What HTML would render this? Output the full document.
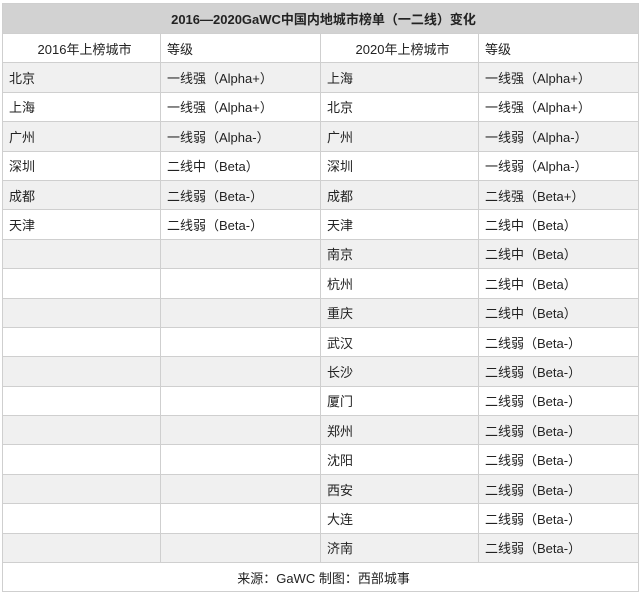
<!DOCTYPE html>
<html><head><meta charset="utf-8"><style>
body{margin:0;background:#fff;width:640px;height:594px;overflow:hidden;font-family:"Liberation Sans","Noto Sans CJK SC",sans-serif;color:#222}
table{position:absolute;left:2px;top:3px;width:636px;border-collapse:collapse;table-layout:fixed}
td{border:1px solid #cfcfcf;font-size:13px;height:28.4px;padding:0 0 0 6px;white-space:nowrap}
tr.t td{background:#d2d2d2;font-weight:bold;text-align:center;height:29px;font-size:13px}
tr.h td{background:#fff}
tr.g td{background:#f0f0f0}
tr.f td{text-align:center;height:28px}
</style></head><body>
<table>
<colgroup><col style="width:158px"><col style="width:160px"><col style="width:158px"><col style="width:160px"></colgroup>
<tr class="t"><td colspan="4">2016—2020GaWC中国内地城市榜单（一二线）变化</td></tr>
<tr class="h"><td style="text-align:center">2016年上榜城市</td><td>等级</td><td style="text-align:center">2020年上榜城市</td><td>等级</td></tr>
<tr class="g"><td>北京</td><td>一线强（Alpha+）</td><td>上海</td><td>一线强（Alpha+）</td></tr>
<tr><td>上海</td><td>一线强（Alpha+）</td><td>北京</td><td>一线强（Alpha+）</td></tr>
<tr class="g"><td>广州</td><td>一线弱（Alpha-）</td><td>广州</td><td>一线弱（Alpha-）</td></tr>
<tr><td>深圳</td><td>二线中（Beta）</td><td>深圳</td><td>一线弱（Alpha-）</td></tr>
<tr class="g"><td>成都</td><td>二线弱（Beta-）</td><td>成都</td><td>二线强（Beta+）</td></tr>
<tr><td>天津</td><td>二线弱（Beta-）</td><td>天津</td><td>二线中（Beta）</td></tr>
<tr class="g"><td></td><td></td><td>南京</td><td>二线中（Beta）</td></tr>
<tr><td></td><td></td><td>杭州</td><td>二线中（Beta）</td></tr>
<tr class="g"><td></td><td></td><td>重庆</td><td>二线中（Beta）</td></tr>
<tr><td></td><td></td><td>武汉</td><td>二线弱（Beta-）</td></tr>
<tr class="g"><td></td><td></td><td>长沙</td><td>二线弱（Beta-）</td></tr>
<tr><td></td><td></td><td>厦门</td><td>二线弱（Beta-）</td></tr>
<tr class="g"><td></td><td></td><td>郑州</td><td>二线弱（Beta-）</td></tr>
<tr><td></td><td></td><td>沈阳</td><td>二线弱（Beta-）</td></tr>
<tr class="g"><td></td><td></td><td>西安</td><td>二线弱（Beta-）</td></tr>
<tr><td></td><td></td><td>大连</td><td>二线弱（Beta-）</td></tr>
<tr class="g"><td></td><td></td><td>济南</td><td>二线弱（Beta-）</td></tr>
<tr class="f"><td colspan="4">来源：GaWC  制图：西部城事</td></tr>
</table>
</body></html>
